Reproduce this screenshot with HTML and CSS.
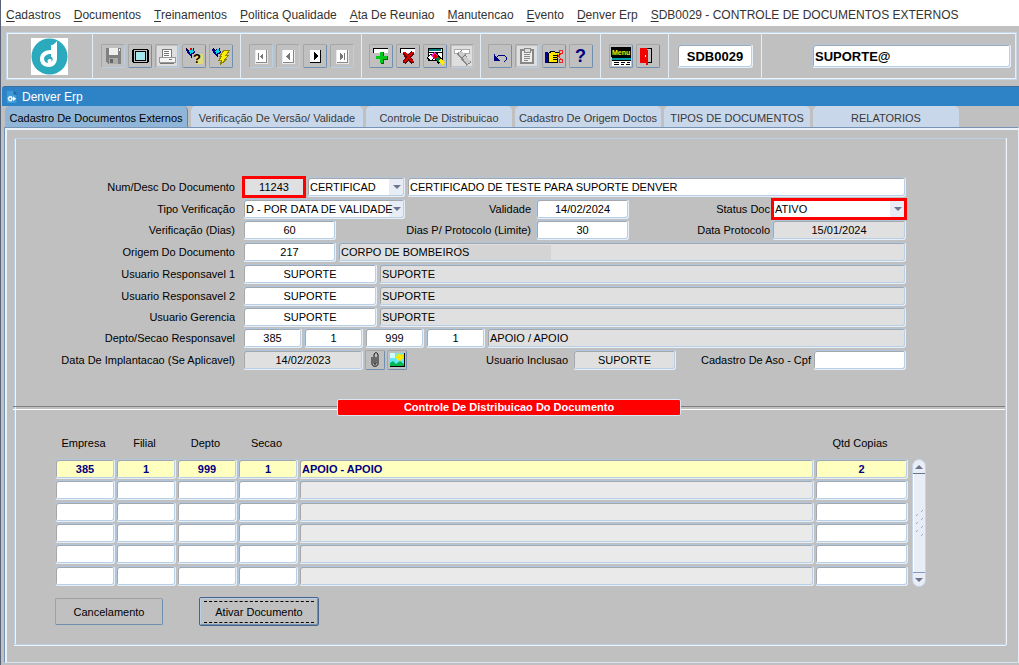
FILE: index.html
```html
<!DOCTYPE html>
<html lang="pt-BR">
<head>
  <meta charset="UTF-8">
  <title>Denver Erp</title>
  <link rel="stylesheet" href="styles.css">
</head>
<body>

  <nav class="menu">
    <a href="#"><u>C</u>adastros</a>
    <a href="#"><u>D</u>ocumentos</a>
    <a href="#"><u>T</u>reinamentos</a>
    <a href="#"><u>P</u>olitica Qualidade</a>
    <a href="#"><u>A</u>ta De Reuniao</a>
    <a href="#"><u>M</u>anutencao</a>
    <a href="#"><u>E</u>vento</a>
    <a href="#"><u>D</u>enver Erp</a>
    <a href="#"><u>S</u>DB0029 - CONTROLE DE DOCUMENTOS EXTERNOS</a>
  </nav>

  <header class="toolbar">
    <div class="toolbar-box">
      <div class="tools tools-logo">
        <svg class="logo" viewBox="0 0 37 37">
          <rect width="37" height="37" fill="#fff"/>
          <circle cx="18.500" cy="18.500" r="18" fill="#2ba9bd"/>
          <path d="M20 7c3 0 4-2 6-4v17c0 5-3 9-8 9-5 0-9-3-9-8 0-6 5-9 11-9z" fill="#fff"/>
          <path d="M20 16c-4 0-7 2-7 5 0 2 2 4 4 4-1-3 0-4 2-4 2 0 2 2 1 3 2-1 2-3 1-5h-1z" fill="#2ba9bd"/>
        </svg>
      </div>

      <div class="tools tools-file">
        <button class="tool off" aria-label="Salvar" disabled><svg viewBox="0 0 20 20">
          <path d="M3 2h15v16H5l-2-2z" fill="#808080"/><path d="M6 2h9v7H6z" fill="#eee"/><path d="M6 12h9v6H6z" fill="#aaa"/><path d="M7 13h3v4H7z" fill="#666"/><path d="M16 3h1v2h-1z" fill="#fff"/>
        </svg></button>
        <button class="tool" aria-label="Tela"><svg viewBox="0 0 20 20">
          <path d="M3 3h15v1h1v12h-1v1H3v-1H2V4h1z" fill="#000"/><path d="M4 4h13v12H4z" fill="#c0c0c0"/><path d="M5 5h11v10H5z" fill="#000"/><path d="M6 6h9v8H6z" fill="#a4e8ee"/>
        </svg></button>
        <button class="tool off pale" aria-label="Imprimir" disabled><svg viewBox="0 0 20 20">
          <path d="M6 3h8v8H5V5z" fill="#fff" stroke="#777"/><path d="M7 5h5v1H7zM7 7h5v1H7zM7 9h5v1H7z" fill="#777"/><path d="M2 11h16v5H2z" fill="#f4f4f4" stroke="#999"/><path d="M3 17h14v1H3z" fill="#777"/><path d="M12 13h3v1h-3z" fill="#777"/>
        </svg></button>
        <button class="tool" aria-label="Entrar consulta"><svg viewBox="0 0 20 20">
          <path d="M11 8h8v10h-8z" fill="#e2dc78"/><path d="M2 3l3 1 5-2 1 5-5 3-3-3z" fill="#000080"/><path d="M5 4l4-1 1 3-4 2z" fill="#00d8e8"/><path d="M6 2h2v2H6z" fill="#e00000"/><path d="M2 2l3 3M7 9l1 3" stroke="#000"/>
          <text class="icon-text" x="9" y="17" font-size="13">?</text>
        </svg></button>
        <button class="tool" aria-label="Executar consulta"><svg viewBox="0 0 20 20">
          <path d="M1 3l3 1 5-2 1 5-5 3-3-3z" fill="#000080"/><path d="M4 4l4-1 1 3-4 2z" fill="#00d8e8"/><path d="M2 2l3 3M6 9l1 2" stroke="#000"/>
          <path d="M13 4h6l-4 5h3l-4 4h2l-7 6 2-5H8l3-4H9z" fill="#ffee00" stroke="#888800"/>
        </svg></button>
      </div>

      <div class="tools tools-nav">
        <button class="tool off" aria-label="Primeiro" disabled><svg viewBox="0 0 20 20">
          <path d="M4 4h13v14H4z" fill="#e8e8e8"/><path d="M5 4h10v12H5z" fill="#fff"/><path d="M15 4h1v13H5v-1h10z" fill="#888"/><path d="M7 7h1v7H7zM12 7v7l-3-3v-1z" fill="#777"/>
        </svg></button>
        <button class="tool off" aria-label="Anterior" disabled><svg viewBox="0 0 20 20">
          <path d="M4 4h13v14H4z" fill="#e8e8e8"/><path d="M5 4h10v12H5z" fill="#fff"/><path d="M15 4h1v13H5v-1h10z" fill="#888"/><path d="M12 7v7l-4-3v-1z" fill="#777"/>
        </svg></button>
        <button class="tool" aria-label="Proximo"><svg viewBox="0 0 20 20">
          <path d="M5 4h10v12H5z" fill="#fff"/><path d="M15 4h1v13H5v-1h10z" fill="#000"/><path d="M9 6v8l4-3v-2z" fill="#000"/>
        </svg></button>
        <button class="tool off" aria-label="Ultimo" disabled><svg viewBox="0 0 20 20">
          <path d="M4 4h13v14H4z" fill="#e8e8e8"/><path d="M5 4h10v12H5z" fill="#fff"/><path d="M15 4h1v13H5v-1h10z" fill="#888"/><path d="M8 7v7l3-3v-1zM12 7h1v7h-1z" fill="#777"/>
        </svg></button>
      </div>

      <div class="tools tools-record">
        <button class="tool" aria-label="Inserir"><svg viewBox="0 0 20 20">
          <path d="M2 3h15v4H2z" fill="#fff"/><path d="M2 2h15v1H2zM2 3h1v4H2z" fill="#000"/>
          <path d="M9 6h3v4h4v3h-4v4H9v-4H5v-3h4z" fill="#00c818"/><path d="M12 6h1v4h-1zM16 10h1v4h-4v4h-3v-1h2v-4h4z" fill="#006408"/>
        </svg></button>
        <button class="tool" aria-label="Excluir"><svg viewBox="0 0 20 20">
          <path d="M2 3h15v4H2z" fill="#fff"/><path d="M2 2h15v1H2zM2 3h1v4H2z" fill="#000"/>
          <path d="M6 7l9 10M15 6L6 17" stroke="#600" stroke-width="4"/><path d="M6 6l9 10M15 6L6 16" stroke="#d40000" stroke-width="2"/>
        </svg></button>
        <button class="tool" aria-label="Limpar tela"><svg viewBox="0 0 20 20">
          <path d="M3 2h14v12H3z" fill="#fff" stroke="#000"/><path d="M4 3h12v2H4z" fill="#008080"/><path d="M3 6h14v1H3z" fill="#000"/><path d="M2 12l4-4 4 2-3 5z" fill="#fff" stroke="#000"/>
          <path d="M9 8l7 8" stroke="#000" stroke-width="6"/><path d="M8 8l4 4" stroke="#f020d0" stroke-width="5"/><path d="M9 9l3 3" stroke="#e00000" stroke-width="3"/><path d="M12 12l3 3" stroke="#008040" stroke-width="3"/><path d="M15 14l4 4" stroke="#ffee00" stroke-width="4"/>
        </svg></button>
        <button class="tool off pale" aria-label="Limpar registro" disabled><svg viewBox="0 0 20 20">
          <path d="M2 3h15v4H2z" fill="#fff" stroke="#aaa"/><path d="M7 6l10 12" stroke="#888" stroke-width="6"/><path d="M8 6l9 11" stroke="#ccc" stroke-width="4"/><path d="M10 12l4-4" stroke="#777"/>
        </svg></button>
      </div>

      <div class="tools tools-edit">
        <button class="tool" aria-label="Desfazer"><svg viewBox="0 0 20 20">
          <path d="M4 8v6h6M5 13l4-4h5l2 2v3l-2 2" fill="none" stroke="#000080"/><path d="M4 9l5 5H4z" fill="#000080"/>
        </svg></button>
        <button class="tool off pale" aria-label="Colar" disabled><svg viewBox="0 0 20 20">
          <path d="M4 4h12v13H4z" fill="#eee" stroke="#888" stroke-width="2"/><path d="M7 2h6v4H7z" fill="#ddd" stroke="#888"/><path d="M7 8h6v1H7zM7 10h6v1H7zM7 12h6v1H7zM7 14h4v1H7z" fill="#888"/>
        </svg></button>
        <button class="tool" aria-label="Lista de valores"><svg viewBox="0 0 20 20">
          <path d="M1 6h3v11H1z" fill="#0000a0"/><path d="M4 8l4-3h2l1 1h4v3h-2v7H4z" fill="#ffe800" stroke="#000"/><path d="M9 9h5M9 11h4M9 13h4" stroke="#000"/>
          <path d="M15 4h3v3h-3zM15 13h3v3h-3zM13 12l5-5M13 8l4 5" fill="none" stroke="#f02020"/>
        </svg></button>
        <button class="tool" aria-label="Ajuda"><svg viewBox="0 0 20 20">
          <text class="icon-text help" x="4" y="16" font-size="18">?</text>
        </svg></button>
      </div>

      <div class="tools tools-exit">
        <button class="tool" aria-label="Menu"><svg viewBox="0 0 20 20">
          <path d="M0 1h20v10H0z" fill="#000"/>
          <text class="icon-text yellow" x="1" y="9" font-size="7">Menu</text>
          <path d="M1 11h19v9H1z" fill="#fff"/><path d="M1 12h19v2H1z" fill="#00a0a8"/><path d="M1 11h19v1H1zM1 14h19v1H1zM3 16h5v1H3zM10 16h4v1h-4zM16 16h3v1h-3zM3 18h5v1H3zM10 18h3v1h-3zM15 18h4v1h-4z" fill="#000"/>
        </svg></button>
        <button class="tool" aria-label="Sair"><svg viewBox="0 0 20 20">
          <path d="M2 2h12v15H2z" fill="#000"/><path d="M9 3h4v13H9z" fill="#c0c0c0"/><path d="M2 2h7v2h1v15H8v-2H2z" fill="#f00000"/><path d="M7 9h1v2H7z" fill="#fff"/>
        </svg></button>
      </div>

      <div class="tools tools-code">
        <input class="field head-field center" type="text" value="SDB0029" aria-label="Programa">
      </div>
      <div class="tools tools-user">
        <input class="field head-field" type="text" value="SUPORTE@" aria-label="Usuario">
      </div>
    </div>
  </header>

  <main class="window">
    <h1 class="title">
      <svg class="title-icon" viewBox="0 0 14 16">
        <path d="M1 1h7l4 4v10H1z" fill="#3f9bd8"/><path d="M9 1l4 4H9z" fill="#1c5f96"/><path d="M3 7h4v6H3zM2 9h6v2H2z" fill="#fff"/><path d="M4 9h2v2H4z" fill="#2d83c5"/><path d="M8 7l4 3-4 3z" fill="#fff"/>
      </svg>
      Denver Erp
    </h1>

    <div class="tabs" role="tablist">
      <button class="tab active" role="tab" aria-selected="true">Cadastro De Documentos Externos</button>
      <button class="tab" role="tab">Verificação De Versão/ Validade</button>
      <button class="tab" role="tab">Controle De Distribuicao</button>
      <button class="tab" role="tab">Cadastro De Origem Doctos</button>
      <button class="tab" role="tab">TIPOS DE DOCUMENTOS</button>
      <button class="tab" role="tab">RELATORIOS</button>
    </div>

    <div class="page">
      <form class="panel">
        <div class="form">
          <div class="group">
            <div class="row">
              <label class="main-label" for="num">Num/Desc Do Documento</label>
              <input class="field center w-num locked marked" id="num" type="text" value="11243" readonly>
              <span class="combo w-type"><select class="field" aria-label="Tipo do documento"><option>CERTIFICAD</option></select></span>
              <input class="field grow" type="text" value="CERTIFICADO DE TESTE PARA SUPORTE DENVER" aria-label="Descricao do documento">
            </div>
            <div class="row">
              <label class="main-label" for="tipo">Tipo Verificação</label>
              <span class="combo w-check"><select class="field" id="tipo"><option>D - POR DATA DE VALIDADE</option></select></span>
              <label class="mid-label" for="validade">Validade</label>
              <input class="field center w-date" id="validade" type="text" value="14/02/2024">
              <label class="side-label" for="status">Status Doc</label>
              <span class="combo w-side marked"><select class="field" id="status"><option>ATIVO</option></select></span>
            </div>
          </div>

          <div class="group">
            <div class="row">
              <label class="main-label" for="dias">Verificação (Dias)</label>
              <input class="field center w-date" id="dias" type="text" value="60">
              <label class="mid-label" for="limite">Dias P/ Protocolo (Limite)</label>
              <input class="field center w-date" id="limite" type="text" value="30">
              <label class="side-label" for="protocolo">Data Protocolo</label>
              <input class="field center w-side locked" id="protocolo" type="text" value="15/01/2024" readonly>
            </div>
            <div class="row">
              <label class="main-label" for="origem">Origem Do Documento</label>
              <input class="field center w-date" id="origem" type="text" value="217">
              <input class="field grow locked masked" type="text" value="CORPO DE BOMBEIROS" aria-label="Nome da origem" readonly>
            </div>
            <div class="row">
              <label class="main-label" for="resp1">Usuario Responsavel 1</label>
              <input class="field center w-user" id="resp1" type="text" value="SUPORTE">
              <input class="field grow locked" type="text" value="SUPORTE" aria-label="Nome do responsavel 1" readonly>
            </div>
            <div class="row">
              <label class="main-label" for="resp2">Usuario Responsavel 2</label>
              <input class="field center w-user" id="resp2" type="text" value="SUPORTE">
              <input class="field grow locked" type="text" value="SUPORTE" aria-label="Nome do responsavel 2" readonly>
            </div>
          </div>

          <div class="group">
            <div class="row">
              <label class="main-label" for="gerencia">Usuario Gerencia</label>
              <input class="field center w-user" id="gerencia" type="text" value="SUPORTE">
              <input class="field grow locked" type="text" value="SUPORTE" aria-label="Nome da gerencia" readonly>
            </div>
          </div>

          <div class="group">
            <div class="row">
              <label class="main-label" for="depto">Depto/Secao Responsavel</label>
              <input class="field center w-code" id="depto" type="text" value="385">
              <input class="field center w-code" type="text" value="1" aria-label="Filial">
              <input class="field center w-code" type="text" value="999" aria-label="Depto">
              <input class="field center w-code" type="text" value="1" aria-label="Secao">
              <input class="field grow locked" type="text" value="APOIO / APOIO" aria-label="Nome do depto" readonly>
            </div>
            <div class="row">
              <label class="main-label" for="implantacao">Data De Implantacao (Se Aplicavel)</label>
              <input class="field center w-implant locked" id="implantacao" type="text" value="14/02/2023" readonly>
              <button class="mini" type="button" aria-label="Anexo"><svg viewBox="0 0 16 16">
                <path d="M5 5v7c0 3 6 3 6 0V3c0-3-4-3-4 0v8c0 2 2 2 2 0V5" fill="none" stroke="#111"/>
              </svg></button>
              <button class="mini" type="button" aria-label="Imagem"><svg viewBox="0 0 16 16">
                <path d="M1 1h14v14H1z" fill="#60e8f8"/><path d="M1 1h5v5H1z" fill="#d0fcff"/><path d="M7 2l2 1 1-2 2 2 2-1v3l1 1-2 1-1 2-2-1-2 1V7L6 5l2-1z" fill="#ffe800"/><path d="M1 11l3-2 3 3 4-3 4 3v3H1z" fill="#00b850"/><path d="M1 15h15V1h-1v13H1z" fill="#000"/>
              </svg></button>
              <label class="mid-label" for="inclusao">Usuario Inclusao</label>
              <input class="field center w-inclusao locked" id="inclusao" type="text" value="SUPORTE" readonly>
              <label class="side-label" for="cpf">Cadastro De Aso - Cpf</label>
              <input class="field w-date" id="cpf" type="text">
            </div>
          </div>
        </div>

        <h2 class="divider"><span class="divider-text">Controle De Distribuicao Do Documento</span></h2>

        <div class="grid">
          <table class="copies">
            <thead>
              <tr>
                <th class="c-code">Empresa</th>
                <th class="c-code">Filial</th>
                <th class="c-code">Depto</th>
                <th class="c-code">Secao</th>
                <th></th>
                <th class="c-qtd">Qtd Copias</th>
              </tr>
            </thead>
            <tbody id="rows"></tbody>
          </table>
          <div class="scroll">
            <button class="scroll-btn up" type="button" aria-label="Subir"></button>
            <div class="thumb"><svg viewBox="0 0 8 28" width="8" height="28">
              <path d="M5 3l2-2M0 7l2-2M5 11l2-2M0 15l2-2M5 19l2-2M0 23l2-2M5 27l2-2" stroke="#8fb0d0"/>
            </svg></div>
            <button class="scroll-btn down" type="button" aria-label="Descer"></button>
          </div>
        </div>

        <div class="actions">
          <button class="btn" type="button">Cancelamento</button>
          <button class="btn focused" type="button"><span class="focus-lines">Ativar Documento</span></button>
        </div>
      </form>
    </div>
  </main>

  <script src="script.js"></script>
</body>
</html>
```

FILE: styles.css
```css
* {
  box-sizing: border-box;
}

body {
  margin: 0;
  min-height: 100vh;
  border-left: 1px solid #5a6478;
  background: #c0c0c0;
  font-family: "Liberation Sans", Arial, sans-serif;
  font-size: 11px;
  color: #000;
}

button, input, select {
  font: inherit;
  color: inherit;
  margin: 0;
  padding: 0;
}

/* menu */
.menu {
  display: flex;
  gap: 13px;
  height: 26px;
  padding: 3px 5px 0;
  align-items: center;
  background: #fff;
  font-size: 12px;
  white-space: nowrap;
}

.menu a {
  color: #333;
  text-decoration: none;
}

.menu u {
  text-underline-offset: 2px;
}

/* toolbar */
.toolbar {
  padding: 6px 2px 6px 5px;
}

.toolbar-box {
  display: flex;
  height: 48px;
  border: 1px solid #c4d6ea;
  box-shadow: inset 1px 1px 0 #eef4fa, inset 0 -1px 0 #eef4fa;
}

.tools {
  display: flex;
  flex: none;
  gap: 3px;
  align-items: center;
  justify-content: center;
  border-right: 1px solid #e4edf7;
}

.tools-logo { width: 86px; }
.tools-file { width: 148px; }
.tools-nav { width: 121px; }
.tools-record { width: 119px; }
.tools-edit { width: 120px; }
.tools-exit { width: 68px; }
.tools-code { width: 93px; }

.tools-user {
  flex: 1;
  padding: 0 4px 0 50px;
}

.logo {
  width: 37px;
  height: 37px;
}

.tool {
  width: 24px;
  height: 24px;
  background: #c0c0c0;
  border: 1px solid;
  border-color: #a6a6a6 #6f8fb0 #6f8fb0 #a6a6a6;
  border-radius: 2px;
}

.tool svg {
  display: block;
  width: 20px;
  height: 20px;
  margin: 1px;
  overflow: visible;
  shape-rendering: crispEdges;
}

.tool.off {
  border-color: #a6a6a6 #b8cfe5 #b8cfe5 #a6a6a6;
}

.tool.pale svg {
  background: #dedede;
}

.icon-text {
  font-weight: bold;
}

.icon-text.help {
  fill: #000080;
}

.icon-text.yellow {
  fill: #ffee00;
}

/* fields */
.field {
  height: 20px;
  padding: 0 2px;
  background-color: #fff;
  border: 1px solid;
  border-color: #b0c6dc #e6eef8 #e6eef8 #b0c6dc;
  border-radius: 3px;
  box-shadow: inset 1px 1px 0 #a4a8ac, inset -1px -1px 0 #b8cfe5;
  outline: none;
}

.field.center {
  text-align: center;
}

.field.locked {
  background-color: #e0e0e0;
}

.head-field {
  width: 76px;
  height: 24px;
  font-size: 13px;
  font-weight: bold;
}

.tools-user .head-field {
  flex: 1;
  width: 0;
}

.combo {
  position: relative;
  display: flex;
}

.combo .field {
  width: 100%;
  appearance: none;
  background: linear-gradient(#e8edf5, #e8edf5) right / 15px 100% no-repeat #fff;
}

.combo::after {
  content: "";
  position: absolute;
  right: 4px;
  top: 8px;
  border: 4px solid transparent;
  border-top-color: #6b7590;
  border-bottom: 0;
  pointer-events: none;
}

.field.marked, .combo.marked {
  outline: 3px solid #f00;
  outline-offset: -2px;
}

.combo.marked .field, .field.marked {
  border-radius: 0;
}

/* covered part of the name */
.field.masked {
  background-image: linear-gradient(#d4d4d4, #d4d4d4);
  background-position: 119px center;
  background-size: 93px 15px;
  background-repeat: no-repeat;
}

.w-num { width: 62px; }
.w-type { width: 98px; }
.w-check { width: 162px; }
.w-date { width: 93px; }
.w-user { width: 134px; }
.w-code { width: 59px; }
.w-implant { width: 120px; }
.w-inclusao { width: 103px; }
.w-side { width: 134px; }

/* window */
.title {
  display: flex;
  align-items: center;
  gap: 4px;
  height: 20px;
  margin: 0 0 0 1px;
  padding-left: 4px;
  background: #2d83c5;
  border-top: 1px solid #3f6f9c;
  border-radius: 3px 0 0 0;
  color: #fff;
  font-size: 12px;
  font-weight: normal;
}

.title-icon {
  width: 12px;
  height: 14px;
}

.tabs {
  display: flex;
  gap: 3px;
  height: 21px;
  padding-left: 4px;
}

.tab {
  flex: none;
  width: 146px;
  padding-top: 2px;
  background: #c9d7ea;
  border: 0;
  border-radius: 5px 5px 0 0;
  color: #3a3a3a;
  white-space: nowrap;
}

.tab.active {
  width: 183px;
  background: #8fb5d8;
  border-right: 1px solid #6486ad;
  color: #000;
}

.tab.active + .tab {
  width: 172px;
}

.page {
  margin-left: 3px;
  padding: 10px 12px 17px 9px;
  border-top: 1px solid #7894b4;
  border-left: 1px solid #7894b4;
  border-right: 1px solid #e6eef8;
  border-bottom: 1px solid #d5e3f2;
  box-shadow: inset 2px 2px 0 #eaf1f9;
}

.panel {
  padding: 38px 0 18px;
  border: 1px solid #b8cfe5;
  box-shadow: inset 1px 0 0 #eef4fa, 0 1px 0 #eef4fa, 1px 0 0 #eef4fa;
}

/* form */
.form {
  display: flex;
  flex-direction: column;
  gap: 1px;
  padding-right: 99px;
}

.group {
  display: flex;
  flex-direction: column;
  gap: 2px;
}

.row {
  display: flex;
  align-items: center;
  gap: 2px;
  height: 20px;
}

.row > * {
  flex: none;
}

.row label {
  text-align: right;
  white-space: nowrap;
}

.row .main-label {
  width: 226px;
  padding-right: 6px;
}

.row .mid-label {
  flex: 1;
  padding-right: 3px;
}

.row .side-label {
  width: 139px;
}

.w-inclusao + .side-label {
  width: 133px;
}

.row .grow {
  flex: 1;
  min-width: 0;
}

.mini {
  width: 20px;
  height: 20px;
  padding: 1px;
  background: #c0c0c0;
  border: 1px solid;
  border-color: #a6a6a6 #6f8fb0 #6f8fb0 #a6a6a6;
  border-radius: 2px;
}

.mini svg {
  display: block;
  width: 16px;
  height: 16px;
}

/* divider */
.divider {
  display: flex;
  align-items: center;
  margin: 29px 0 11px -2px;
  font-size: 11px;
}

.divider::before, .divider::after {
  content: "";
  flex: 1;
  height: 2px;
  border-top: 1px solid #808080;
  border-bottom: 1px solid #fff;
}

.divider-text {
  width: 344px;
  line-height: 15px;
  background: #f00;
  border: 1px solid #dbe7f4;
  border-radius: 2px;
  color: #fff;
  text-align: center;
}

/* table */
.grid {
  display: flex;
  align-items: flex-end;
  gap: 3px;
  padding: 0 79px 0 40px;
}

.copies {
  flex: 1;
  table-layout: fixed;
  border-collapse: collapse;
}

.copies th {
  height: 32px;
  padding: 0 4px 0 0;
  font-weight: normal;
}

.copies td {
  height: 21px;
  padding: 0 1px 0 0;
  vertical-align: top;
}

.copies tbody tr:nth-child(3n+2) td {
  height: 22px;
}

.copies .field {
  display: block;
  width: 100%;
}

.copies .locked {
  background-color: #eaeaea;
}

.copies .current .field {
  background-color: #ffffc0;
  color: #000080;
  font-weight: bold;
}

.c-code { width: 61px; }
.c-qtd { width: 94px; }

.scroll {
  display: flex;
  flex-direction: column;
  width: 14px;
  height: 128px;
  background: #e8edf6;
  border: 1px solid #c4d4e6;
  border-radius: 7px;
}

.scroll-btn {
  height: 14px;
  background: none;
  border: 0;
}

.scroll-btn::before {
  content: "";
  display: block;
  width: 0;
  margin: 0 auto;
  border: 4px solid transparent;
}

.scroll-btn.up {
  border-bottom: 1px solid #6b7590;
}

.scroll-btn.up::before {
  border-bottom-color: #6b7590;
  border-top: 0;
}

.scroll-btn.down {
  border-top: 1px solid #7f9dc0;
}

.scroll-btn.down::before {
  border-top-color: #6b7590;
  border-bottom: 0;
}

.thumb {
  display: flex;
  flex: 1;
  align-items: center;
  justify-content: center;
  border-left: 1px solid #fff;
}

/* actions */
.actions {
  display: flex;
  align-items: center;
  gap: 36px;
  padding: 10px 40px 0;
}

.btn {
  width: 108px;
  height: 27px;
  background: #c0c0c0;
  border: 1px solid;
  border-color: #a0a0a0 #6f8fb0 #6f8fb0 #a0a0a0;
  border-radius: 2px;
}

.btn.focused {
  width: 120px;
  height: 29px;
  padding: 0 4px;
  border-color: #46648c;
  box-shadow: inset 1px 1px 0 #b8cfe5, inset -1px -1px 0 #6f8fb0;
}

.focus-lines {
  display: block;
  line-height: 20px;
  border-top: 1px dashed #000;
  border-bottom: 1px dashed #000;
}
```

FILE: script.js
```javascript
const rows = [
  ['385', '1', '999', '1', 'APOIO - APOIO', '2'],
  ['', '', '', '', '', ''],
  ['', '', '', '', '', ''],
  ['', '', '', '', '', ''],
  ['', '', '', '', '', ''],
  ['', '', '', '', '', '']
];
const names = ['Empresa', 'Filial', 'Depto', 'Secao', 'Descricao', 'Qtd Copias'];

const tbody = document.getElementById('rows');

rows.forEach(function(row, i) {
  const tr = document.createElement('tr');
  if (i === 0) tr.className = 'current';

  row.forEach(function(value, col) {
    const td = document.createElement('td');
    const input = document.createElement('input');
    input.type = 'text';
    input.value = value;
    input.setAttribute('aria-label', names[col] + ' ' + (i + 1));
    input.className = col === 4 ? 'field locked' : 'field center';
    input.readOnly = col === 4;
    td.appendChild(input);
    tr.appendChild(td);
  });

  tbody.appendChild(tr);
});
```
